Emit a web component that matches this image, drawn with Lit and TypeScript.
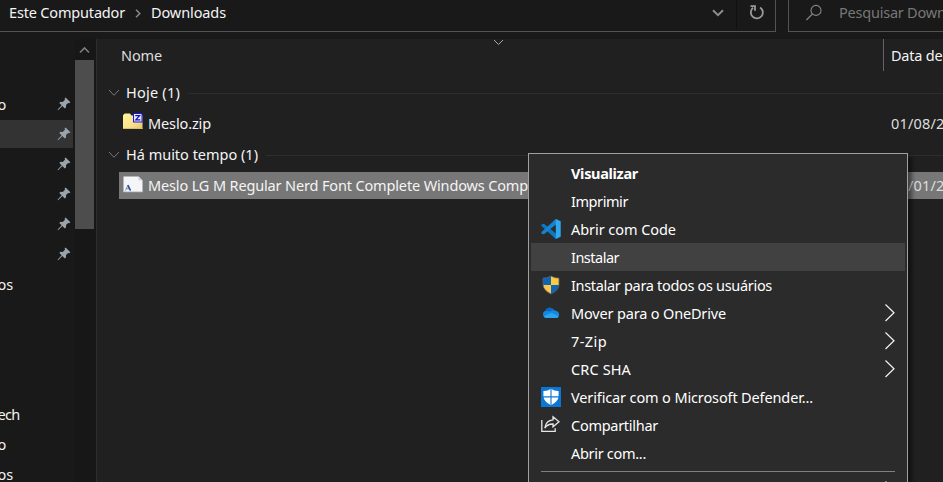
import { LitElement, html, css, svg, nothing } from "lit";
import { customElement, property } from "lit/decorators.js";
import { classMap } from "lit/directives/class-map.js";

/** A single-line label whose tracking is tuned so it spans a given width. */
@customElement("ui-label")
class UiLabel extends LitElement {
  @property() text = "";
  @property({ type: Number }) span = 0;

  static styles = css`
    :host { display: inline-block; white-space: pre; }
  `;

  render() {
    return html`<span>${this.text}</span>`;
  }

  updated() {
    const el = this.renderRoot.querySelector("span")!;
    el.style.letterSpacing = "0px";
    if (!this.span) return;
    const natural = el.getBoundingClientRect().width;
    el.style.letterSpacing = `${(this.span - natural) / this.text.length}px`;
  }
}

const label = (text: string, span = 0) => html`<ui-label .text=${text} .span=${span}></ui-label>`;

const pin = html`<svg class="pin" width="14" height="14" viewBox="0 0 14 14">
  <path d="M8.6 .5 13.4 5.2 12.1 6.2 11.2 5.9 9 8.1 9.1 10.2 7.8 11.4 5.3 9 1.4 13 .6 13.2 .8 12.4 4.6 8.3 2.3 6 3.5 4.8 5.7 4.9 8 2.7 7.6 1.6Z" fill="#99a4ac"/>
</svg>`;

const groupChevron = html`<svg class="gchev" width="12" height="8" viewBox="0 0 12 8">
  <path d="M1 1 6 6.3 11 1" fill="none" stroke="#777" stroke-width="1"/>
</svg>`;

const zipIcon = html`<svg width="20" height="18" viewBox="0 0 20 18">
  <defs><linearGradient id="z" x1="0" y1="0" x2="1" y2="1"><stop offset="0" stop-color="#fff59a"/><stop offset=".6" stop-color="#f9e08c"/><stop offset="1" stop-color="#e9bf72"/></linearGradient></defs>
  <path d="M0 3.5 1 2 2 1.5H7L8.5 3.5H19.5V17H0Z" fill="url(#z)"/>
  <path d="M0 16.5H19.5" stroke="#d9bd68"/>
  <rect x="10.5" y="1.5" width="8.5" height="8.5" fill="#e4e4ff" stroke="#1616d8"/>
  <path d="M12.3 3.7H16.6L12.8 7.8H17.3" fill="none" stroke="#1414b8" stroke-width="1.2"/>
</svg>`;

const fontIcon = html`<svg width="20" height="17" viewBox="0 0 20 17">
  <path d="M.5 .5H15.5L19.5 4.5V16H.5Z" fill="#f3f5f7"/>
  <path d="M15.5 .5V4.5H19.5Z" fill="#cdd3d8"/>
  <path d="M.5 15.7H19.5" stroke="#c9ced4"/>
  <path d="M2.4 14.5 4.9 9.2 7.4 14.5M3.2 12.7H6.6" fill="none" stroke="#6b86cb" stroke-width=".9"/>
  <path d="M4.9 9.2 7.4 14.5" stroke="#2c4c9c" stroke-width="1.6"/>
</svg>`;

const codeIcon = svg`<svg width="20" height="20" viewBox="0 0 20 20">
  <path d="M.4 5.8 2 4.7 3.3 4.9 15 14.6V19.9L14.2 19.5 .5 7.1Q0 6.4 .4 5.8Z" fill="#0a78c2"/>
  <path d="M.4 14.2 2 15.3 3.3 15.1 15 5.4V.1L14.2 .5 .5 12.9Q0 13.6 .4 14.2Z" fill="#1583cf"/>
  <path d="M14.8 0 19.7 2.2V17.8L14.8 20Z" fill="#2fa8f2"/>
</svg>`;

const uacIcon = svg`<svg width="20" height="20" viewBox="0 0 20 20">
  <clipPath id="sh"><path d="M10 1Q13.8 3.3 18 3.1V10Q17.4 15.6 10 19 2.6 15.6 2 10V3.1Q6.2 3.3 10 1Z"/></clipPath>
  <g clip-path="url(#sh)"><path d="M0 0H10V10H0Z" fill="#0b66b8"/><path d="M10 0H20V10H10Z" fill="#ffc83d"/><path d="M0 10H10V20H0Z" fill="#ffc54a"/><path d="M10 10H20V20H10Z" fill="#0b66b8"/></g>
  <path d="M10 1Q13.8 3.3 18 3.1V10Q17.4 15.6 10 19 2.6 15.6 2 10V3.1Q6.2 3.3 10 1Z" fill="none" stroke="#55606a" stroke-width=".8"/>
</svg>`;

const cloudIcon = svg`<svg width="20" height="20" viewBox="0 0 20 20">
  <path d="M4 7.9Q5.5 4.6 9 4.6 12 4.6 13.8 7.4L13 12H3Q1.8 11.5 2 10 2.3 8.2 4 7.9Z" fill="#0f66bd"/>
  <path d="M9 8.6Q11 6.9 14 7.4 17.6 8 18.2 11.2 18 14.8 15.3 15H5.5Q2.4 14.8 2 11.4 2.3 8.2 5.2 8Z" fill="#1688dd"/>
  <path d="M2.6 13.2 10.5 9.8 17.8 13.2Q17 15 15.3 15H5.5Q3.6 15 2.6 13.2Z" fill="#2aa5ef"/>
</svg>`;

const defenderIcon = svg`<svg width="20" height="20" viewBox="0 0 20 20">
  <path d="M0 0H20V20H0Z" fill="#0c76d4"/>
  <path d="M10 1.8Q13.5 4.2 17.6 4V9.5Q17 15 10 18.2 3 15 2.4 9.5V4Q6.5 4.2 10 1.8Z" fill="#fff"/>
  <path d="M10 1V19M2 9.9H18" stroke="#0c76d4" stroke-width="1.1"/>
</svg>`;

const shareIcon = svg`<svg width="20" height="20" viewBox="0 0 20 20">
  <path d="M.8 5V16.4H14.2V13.2" fill="none" stroke="#e6e6e6" stroke-width="1.3"/>
  <path d="M12 1.8 18 6.8 12 11.8V9Q6.8 8.8 3.8 13 4.8 5.6 12 4.8Z" fill="none" stroke="#e6e6e6" stroke-width="1.3"/>
</svg>`;

interface Item { text: string; w: number; icon?: unknown; sub?: boolean; bold?: boolean; hot?: boolean }

const items: Item[] = [
  { text: "Visualizar", w: 67, bold: true },
  { text: "Imprimir", w: 57 },
  { text: "Abrir com Code", w: 105, icon: codeIcon },
  { text: "Instalar", w: 48, hot: true },
  { text: "Instalar para todos os usuários", w: 201, icon: uacIcon },
  { text: "Mover para o OneDrive", w: 155, icon: cloudIcon, sub: true },
  { text: "7-Zip", w: 36, sub: true },
  { text: "CRC SHA", w: 60, sub: true },
  { text: "Verificar com o Microsoft Defender...", w: 242, icon: defenderIcon },
  { text: "Compartilhar", w: 87, icon: shareIcon },
  { text: "Abrir com...", w: 75 },
];

@customElement("context-menu")
class ContextMenu extends LitElement {
  static styles = css`
    :host {
      display: block; box-sizing: border-box; width: 380px; height: 360px;
      border: 1px solid #a0a0a0; background: #2b2b2b; color: #fff;
      padding: 5px 2px; box-shadow: 4px 4px 4px rgba(0, 0, 0, 0.45);
    }
    .item { display: grid; grid-template-columns: 20px 1fr 12px; column-gap: 10px; align-items: center; height: 28px; padding: 0 9px 0 10px; }
    .hot { background: #414141; }
    .bold { font-weight: 700; }
    .icon { display: flex; }
    .chev { display: block; }
    .sep { height: 1px; background: #808080; margin: 4px 10px; }
  `;

  row(i: Item) {
    return html`<div class=${classMap({ item: true, hot: !!i.hot, bold: !!i.bold })}>
      <span class="icon">${i.icon ?? nothing}</span>
      ${label(i.text, i.w)}
      ${i.sub ? html`<svg class="chev" width="12" height="18" viewBox="0 0 12 18"><path d="M1.5 .5 10 8.7 1.5 17" fill="none" stroke="#f2f2f2" stroke-width="1.2"/></svg>` : nothing}
    </div>`;
  }

  render() {
    return html`${items.map((i) => this.row(i))}<div class="sep"></div>${this.row({ text: "", w: 0, sub: true })}`;
  }
}

@customElement("app-root")
class AppRoot extends LitElement {
  static styles = css`
    :host {
      display: grid; grid-template-rows: 39px 1fr; position: relative; overflow: hidden;
      width: 943px; height: 482px; background: #191919; color: #f4f4f4;
      font: 14.5px/20px "Noto Sans", "Open Sans", sans-serif;
    }
    svg { flex: none; }
    .bar { display: grid; grid-template-columns: 776px 155px; column-gap: 12px; height: 32px; }
    .address, .search { display: flex; align-items: center; box-sizing: border-box; border: solid #535353; border-width: 0 1px 1px 0; padding-bottom: 5px; white-space: nowrap; overflow: hidden; }
    .address ui-label, .search ui-label { margin-bottom: 2px; }
    .address { padding-left: 9px; }
    .search { border-width: 0 0 1px 1px; color: #777; padding-left: 16px; gap: 16px; }
    .crumb { margin: 0 10px; }
    .tools { margin-left: auto; display: flex; align-items: center; height: 32px; }
    .down { margin-right: 12px; }
    .refresh { display: flex; align-items: center; height: 32px; border-left: 1px solid #111; padding: 0 10px 2px 12px; box-sizing: border-box; }
    .body { display: grid; grid-template-columns: 75px 21px 1fr; min-height: 0; }
    .nav { padding-top: 51px; }
    .navrow { display: flex; align-items: center; justify-content: space-between; height: 28px; width: 73px; margin-bottom: 2px; }
    .navrow.on { background: #333; }
    .navrow.gap { margin-bottom: 102px; }
    .navtext { margin-left: -2.5px; }
    .pin { margin: 0 2px 0 auto; }
    .scroll { background: #171717; }
    .arrow { display: flex; justify-content: center; align-items: center; width: 19px; height: 21px; }
    .thumb { width: 19px; height: 169px; background: #4d4d4d; }
    .files { background: #202020; border-left: 1px solid #2d2d2d; overflow: hidden; }
    .head { display: grid; grid-template-columns: 786px 1fr; height: 32px; }
    .name { padding: 6px 0 0 24px; color: #dedede; }
    .date { border-left: 1px solid #636363; padding: 6px 0 0 7px; white-space: nowrap; overflow: hidden; }
    .name, .date { box-sizing: border-box; }
    .group { display: flex; align-items: center; height: 20px; padding-left: 11px; }
    .group ui-label, .file ui-label { margin-bottom: 2px; }
    .first { margin-top: 12px; }
    .gchev { margin-right: 6px; }
    .rule { flex: 1; height: 1px; background: #2d2d2d; margin-left: 8px; }
    .file { display: grid; grid-template-columns: 20px 740px 1fr; align-items: center; height: 27px; margin-left: 22px; padding-left: 4px; white-space: nowrap; }
    .file > ui-label { margin-left: 5px; }
    .when { display: flex; margin-left: 8px; color: #dedede; }
    .zip { margin: 7px 0 8px 22px; }
    .zip svg { margin-top: -6px; }
    .sel { margin-top: 7px; background: #777; }
    .sel svg { margin-top: -3px; }
    .sort { position: absolute; left: 493px; top: 39px; }
    context-menu { position: absolute; left: 528px; top: 153px; }
  `;

  nav(text: string, w: number, opts: { on?: boolean; gap?: boolean; pinned?: boolean } = {}) {
    return html`<div class=${classMap({ navrow: true, on: !!opts.on, gap: !!opts.gap })}>
      <span class="navtext">${text ? label(text, w) : nothing}</span>${opts.pinned ? pin : nothing}
    </div>`;
  }

  render() {
    return html`
      <div class="bar">
        <div class="address">
          ${label("Este Computador", 116)}
          <svg class="crumb" width="6" height="9" viewBox="0 0 6 9"><path d="M1 .7 4.8 4.5 1 8.3" fill="none" stroke="#8a8a8a" stroke-width="1.5"/></svg>
          ${label("Downloads", 75)}
          <div class="tools">
            <svg class="down" width="12" height="8" viewBox="0 0 12 8"><path d="M1 1.2 6 6.2 11 1.2" fill="none" stroke="#8d8d8d" stroke-width="2"/></svg>
            <div class="refresh"><svg width="16" height="17" viewBox="0 0 16 17"><path d="M11.1 3.4A6 6 0 1 1 4 3.8" fill="none" stroke="#999" stroke-width="1.8"/><path d="M1.5 2.2H6V6.8" fill="none" stroke="#999" stroke-width="1.8"/></svg></div>
          </div>
        </div>
        <div class="search">
          <svg width="18" height="18" viewBox="0 0 18 18"><circle cx="11" cy="6.4" r="5" fill="none" stroke="#858585" stroke-width="1.1"/><path d="M7.4 10 1.4 16" stroke="#858585" stroke-width="1.2"/></svg>
          ${label("Pesquisar Downloads", 142)}
        </div>
      </div>
      <div class="body">
        <div class="nav">
          ${this.nav("o", 0, { pinned: true })}
          ${this.nav("", 0, { on: true, pinned: true })}
          ${[0, 1, 2, 3].map(() => this.nav("", 0, { pinned: true }))}
          ${this.nav("os", 0, { gap: true })}
          ${this.nav("ech", 22)}
          ${this.nav("o", 0)}
          ${this.nav("os", 0)}
        </div>
        <div class="scroll">
          <div class="arrow"><svg width="11" height="8" viewBox="0 0 11 8"><path d="M1 6.5 5.5 2 10 6.5" fill="none" stroke="#7d7d7d" stroke-width="1.6"/></svg></div>
          <div class="thumb"></div>
        </div>
        <div class="files">
          <div class="head"><div class="name">${label("Nome", 41)}</div><div class="date">${label("Data de modificação", 135)}</div></div>
          <div class="group first">${groupChevron}${label("Hoje (1)", 54)}<div class="rule"></div></div>
          <div class="file zip">${zipIcon}${label("Meslo.zip", 63)}<span class="when">${label("01/08/2021", 79)}</span></div>
          <div class="group">${groupChevron}${label("Há muito tempo (1)", 132)}<div class="rule"></div></div>
          <div class="file sel">${fontIcon}${label("Meslo LG M Regular Nerd Font Complete Windows Comp", 380)}<span class="when">${label("01/01/2021", 79)}</span></div>
        </div>
      </div>
      <svg class="sort" width="11" height="7" viewBox="0 0 11 7"><path d="M1 1 5.5 5.5 10 1" fill="none" stroke="#a8a8a8"/></svg>
      <context-menu></context-menu>
    `;
  }
}
